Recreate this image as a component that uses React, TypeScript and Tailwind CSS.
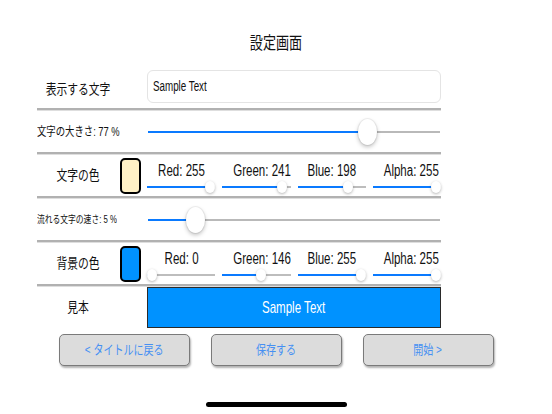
import React from 'react';

const ColorSlider: React.FC<{ value: number }> = ({ value }) => {
  const v = value / 255;
  return (
    <div className="relative h-[12px] w-full">
      <div className="absolute left-0 right-0 top-[5px] h-[2px] bg-[#bdbdbd]" />
      <div className="absolute left-0 top-[5px] h-[2px] bg-[#0a7aff]" style={{ width: `calc(5px + ${v} * (100% - 10px))` }} />
      <div
        className="absolute top-[0px] h-[12px] w-[10px] rounded-[50%] bg-white shadow-[0_1px_3px_rgba(0,0,0,0.3)]"
        style={{ left: `calc(${v} * (100% - 10px))` }}
      />
    </div>
  );
};

const BigSlider: React.FC<{ value: number }> = ({ value }) => (
  <div className="relative h-[28px] w-[292px]">
    <div className="absolute left-0 right-0 top-[13px] h-[2px] bg-[#b9b9b9]" />
    <div className="absolute left-0 top-[13px] h-[2px] bg-[#0a7aff]" style={{ width: `calc(9px + ${value} * (100% - 19px))` }} />
    <div
      className="absolute top-[1px] h-[26px] w-[19px] rounded-[50%] bg-white shadow-[0_2px_4px_rgba(0,0,0,0.25)] ring-1 ring-black/5"
      style={{ left: `calc(${value} * (100% - 19px))` }}
    />
  </div>
);

const Sep = () => <div className="h-[3px] border-t-2 border-b border-t-[#b1b1b1] border-b-[#dedede]" />;

const ColorRow: React.FC<{ label: string; swatch: string; rgba: number[] }> = ({ label, swatch, rgba }) => {
  const names = ['Red', 'Green', 'Blue', 'Alpha'];
  return (
    <div className="flex h-[41px] items-center">
      <div className="w-[82px] text-center text-[14px]">
        <span className="inline-block scale-x-[0.77] whitespace-nowrap">{label}</span>
      </div>
      <div className="ml-[1px] h-[36px] w-[21px] rounded-[5px] border-2 border-black" style={{ backgroundColor: swatch }} />
      <div className="ml-[6px] grid h-full w-[294px] grid-cols-4 gap-[7px]">
        {names.map((n, i) => (
          <div key={n} className="flex flex-col">
            <div className="mt-[6px] h-[20px] text-center text-[16px] leading-[20px]">
              <span className="inline-block scale-x-[0.72] whitespace-nowrap">{n}: {rgba[i]}</span>
            </div>
            <ColorSlider value={rgba[i]} />
          </div>
        ))}
      </div>
    </div>
  );
};

const Button: React.FC<{ children: React.ReactNode }> = ({ children }) => (
  <button className="flex h-[32px] w-[131px] items-center justify-center rounded-[5px] border border-[#7a7a7a] bg-[#dcdcdc] text-[13px] text-[#4690f3] shadow-[1px_2px_2px_rgba(0,0,0,0.3)]">
    <span className="inline-block scale-x-[0.77] whitespace-nowrap">{children}</span>
  </button>
);

export default function App() {
  return (
    <div className="h-[414px] w-[552px] overflow-hidden bg-white font-['Liberation_Sans','Noto_Sans_CJK_JP',sans-serif] text-[#111]">
      {/* title */}
      <div className="h-[70px] pt-[34px] text-center text-[17px] leading-[20px]">
        <span className="inline-block scale-x-[0.77]">設定画面</span>
      </div>

      <div className="ml-[37px] w-[404px]">
        {/* display text */}
        <div className="flex h-[38px]">
          <div className="flex w-[82px] items-center justify-center text-[14px]">
            <span className="inline-block scale-x-[0.77] whitespace-nowrap">表示する文字</span>
          </div>
          <div className="ml-[28px] flex h-[33px] w-[294px] items-center rounded-[6px] border border-[#e4e4e4] pl-[5px] text-[14px]">
            <span className="inline-block origin-left scale-x-[0.7] whitespace-nowrap">Sample Text</span>
          </div>
        </div>
        <Sep />

        {/* font size */}
        <div className="flex h-[41px] items-center">
          <div className="w-[111px] text-[12px]">
            <span className="inline-block origin-left scale-x-[0.78] whitespace-nowrap">文字の大きさ: 77 %</span>
          </div>
          <BigSlider value={0.77} />
        </div>
        <Sep />

        <ColorRow label="文字の色" swatch="#fff1c6" rgba={[255, 241, 198, 255]} />
        <Sep />

        {/* speed */}
        <div className="flex h-[41px] items-center">
          <div className="w-[111px] text-[10.5px]">
            <span className="inline-block origin-left scale-x-[0.74] whitespace-nowrap">流れる文字の速さ: 5 %</span>
          </div>
          <BigSlider value={0.141} />
        </div>
        <Sep />

        <ColorRow label="背景の色" swatch="#0092ff" rgba={[0, 146, 255, 255]} />
        <Sep />

        {/* sample */}
        <div className="flex h-[41px]">
          <div className="flex w-[82px] items-center justify-center text-[14px]">
            <span className="inline-block scale-x-[0.77]">見本</span>
          </div>
          <div className="ml-[28px] flex w-[294px] items-center justify-center border border-[#2a2a2a] bg-[#0092ff] text-[17px] text-white">
            <span className="inline-block scale-x-[0.68] whitespace-nowrap">Sample Text</span>
          </div>
        </div>
      </div>

      {/* buttons */}
      <div className="mt-[6px] flex justify-center gap-[21px]">
        <Button>&lt; タイトルに戻る</Button>
        <Button>保存する</Button>
        <Button>開始 &gt;</Button>
      </div>

      <div className="mx-auto mt-[36px] h-[5px] w-[141px] rounded-full bg-black" />
    </div>
  );
}
